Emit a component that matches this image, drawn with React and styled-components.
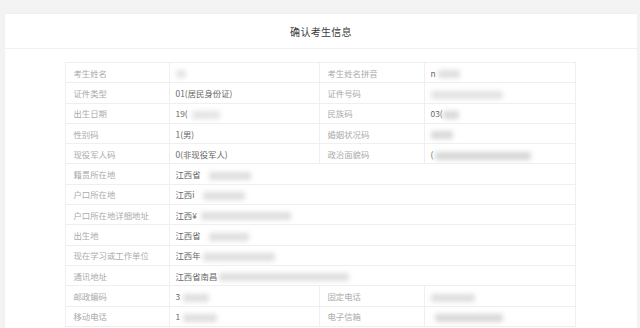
import styled, { createGlobalStyle } from "styled-components";

const GlobalStyle = createGlobalStyle`
  html, body {
    margin: 0;
    padding: 0;
    background: #f3f3f3;
    font-family: "Noto Sans CJK SC", "Noto Sans", sans-serif;
  }
`;

const Page = styled.div`
  width: 640px;
  height: 328px;
  overflow: hidden;
  padding: 14px 3px 0 5px;
  box-sizing: border-box;
`;

const Card = styled.div`
  background: #fff;
  height: 100%;
  box-shadow: 0 0 2px rgba(0, 0, 0, 0.04);
`;

const Header = styled.div`
  height: 34px;
  display: flex;
  align-items: center;
  justify-content: center;
  border-bottom: 1px solid #f0f0f0;
  font-size: 10px;
  color: #3a3a3a;
  letter-spacing: 0.3px;
`;

const Body = styled.div`
  display: flex;
  justify-content: center;
  padding-top: 13px;
  padding-right: 2px;
`;

const Table = styled.table`
  border-collapse: collapse;
  width: 510px;
  table-layout: fixed;
  font-size: 8.4px;
`;

const Col = styled.col`
  width: ${(p) => p.$w}px;
`;

const Row = styled.tr`
  height: 20.3px;
`;

const Label = styled.td`
  border: 1px solid #efefef;
  color: #ababab;
  padding: 0 0 0 8px;
  white-space: nowrap;
  overflow: hidden;
`;

const Value = styled.td`
  border: 1px solid #efefef;
  color: #666;
  padding: 0 0 0 6px;
  white-space: nowrap;
  overflow: hidden;
`;

const Blur = styled.span`
  display: inline-block;
  vertical-align: middle;
  width: ${(p) => p.$w}px;
  height: 8px;
  margin-left: ${(p) => p.$ml || 0}px;
  background: ${(p) => p.$c || "#dedede"};
  filter: blur(2.4px);
  border-radius: 2px;
`;

const V = ({ text, blur, ml, c }) => (
  <>
    {text}
    {blur ? <Blur $w={blur} $ml={ml} $c={c} /> : null}
  </>
);

export default function App() {
  return (
    <Page>
      <GlobalStyle />
      <Card>
        <Header>确认考生信息</Header>
        <Body>
          <Table>
            <colgroup>
              <Col $w={104} />
              <Col $w={150} />
              <Col $w={105} />
              <Col $w={151} />
            </colgroup>
            <tbody>
              <Row>
                <Label>考生姓名</Label>
                <Value><V blur={10} c="#e4e4e4" /></Value>
                <Label>考生姓名拼音</Label>
                <Value><V text="n" blur={22} ml={2} /></Value>
              </Row>
              <Row>
                <Label>证件类型</Label>
                <Value>01(居民身份证)</Value>
                <Label>证件号码</Label>
                <Value><V blur={72} c="#e2e2e2" /></Value>
              </Row>
              <Row>
                <Label>出生日期</Label>
                <Value><V text="19(" blur={28} ml={4} c="#e4e4e4" /></Value>
                <Label>民族码</Label>
                <Value><V text="03(" blur={16} c="#d8d8d8" /></Value>
              </Row>
              <Row>
                <Label>性别码</Label>
                <Value>1(男)</Value>
                <Label>婚姻状况码</Label>
                <Value><V blur={22} c="#d8d8d8" /></Value>
              </Row>
              <Row>
                <Label>现役军人码</Label>
                <Value>0(非现役军人)</Value>
                <Label>政治面貌码</Label>
                <Value><V text="(" blur={96} ml={2} c="#d6d6d6" /></Value>
              </Row>
              <Row>
                <Label>籍贯所在地</Label>
                <Value colSpan={3}><V text="江西省" blur={42} ml={8} /></Value>
              </Row>
              <Row>
                <Label>户口所在地</Label>
                <Value colSpan={3}><V text="江西i" blur={42} ml={8} /></Value>
              </Row>
              <Row>
                <Label>户口所在地详细地址</Label>
                <Value colSpan={3}><V text="江西¥" blur={90} ml={4} /></Value>
              </Row>
              <Row>
                <Label>出生地</Label>
                <Value colSpan={3}><V text="江西省" blur={40} ml={8} /></Value>
              </Row>
              <Row>
                <Label>现在学习或工作单位</Label>
                <Value colSpan={3}><V text="江西年" blur={72} ml={2} /></Value>
              </Row>
              <Row>
                <Label>通讯地址</Label>
                <Value colSpan={3}><V text="江西省南昌" blur={130} ml={2} /></Value>
              </Row>
              <Row>
                <Label>邮政编码</Label>
                <Value><V text="3" blur={26} ml={3} /></Value>
                <Label>固定电话</Label>
                <Value><V blur={44} /></Value>
              </Row>
              <Row>
                <Label>移动电话</Label>
                <Value><V text="1" blur={34} ml={3} /></Value>
                <Label>电子信箱</Label>
                <Value><V blur={68} ml={4} c="#d8d8d8" /></Value>
              </Row>
            </tbody>
          </Table>
        </Body>
      </Card>
    </Page>
  );
}
